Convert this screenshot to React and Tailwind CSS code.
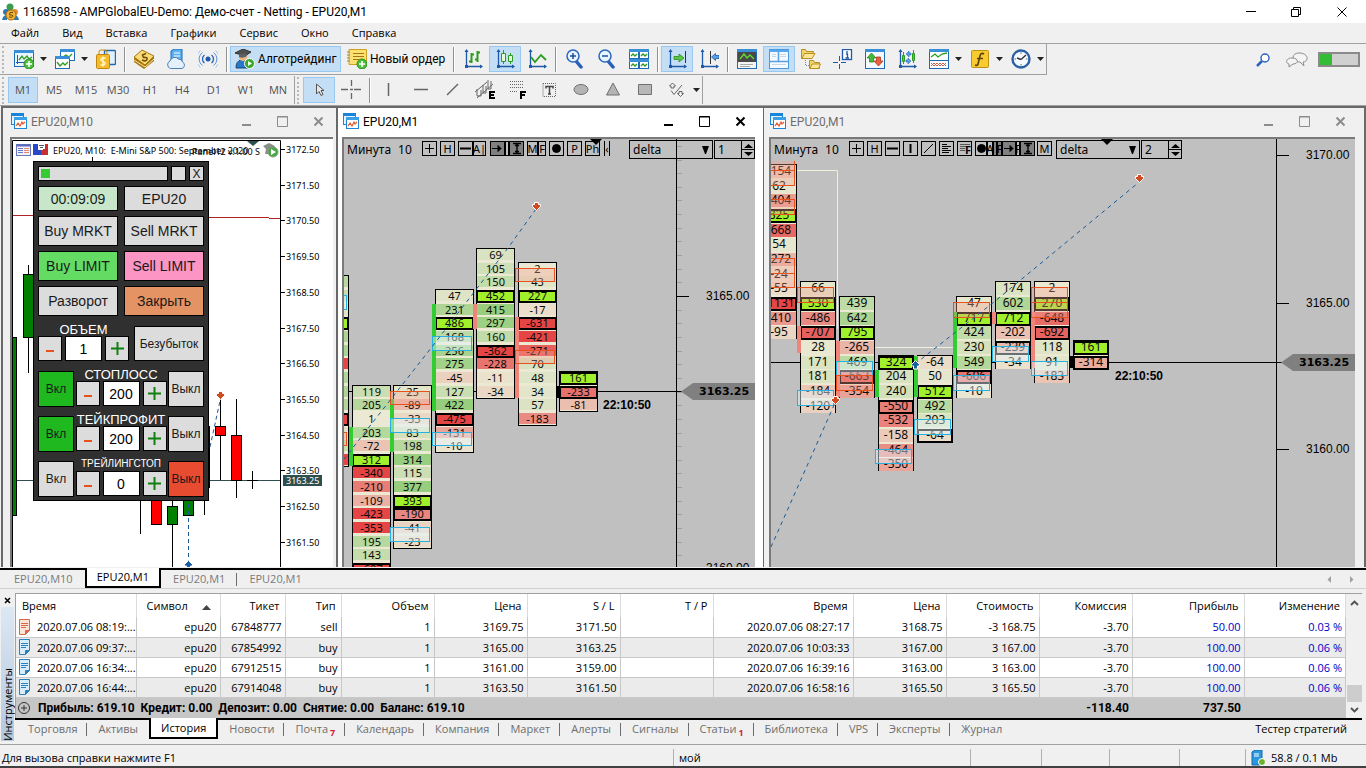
import React from "react";

const GREEN = "#33cc33";
const SALMON = "#f08478";
const ORANGE = "#e8501c";
const CYAN = "#28b0e0";
const LINK = "#1a5a96";

/* ---------- footprint data ---------- */

// start = row of the first cell, row 0 is 3165.00
const clustersLeft = [
  {
    x: -34,
    start: -1,
    bare: true,
    cells: [190, 130, 40, 610, 230, 240, -330, 220, 230, 210, -480, -20, 150, -430],
    boxes: [[0, CYAN], [10, ORANGE]],
  },
  {
    x: 8,
    start: 7,
    cells: [119, 205, 1, 203, -72, 312, -340, -210, -109, -423, -353, 195, 143, -607],
    bar: [GREEN, 10, 12],
  },
  {
    x: 49,
    start: 7,
    cells: [25, -89, -33, 83, 198, 314, 115, 377, 393, -190, -41, -23],
    bar: [GREEN, 8, 11],
    boxes: [[7, ORANGE], [9, CYAN], [17, CYAN]],
  },
  {
    x: 91,
    start: 0,
    cells: [47, 231, 486, 168, 256, 275, -45, 127, 422, -475, -131, -10],
    bar: [GREEN, 1, 8],
    boxes: [[3, CYAN], [10, CYAN]],
  },
  {
    x: 132,
    start: -3,
    cells: [69, 105, 150, 452, 415, 297, 160, -362, -228, -11, -34],
    bar: [SALMON, 1, 2],
  },
  {
    x: 174,
    start: -2,
    cells: [2, 43, 227, -17, -631, -421, -271, 70, 48, 34, 57, -183],
    bar: [SALMON, 2, 7],
    boxes: [[-2, ORANGE], [4, ORANGE]],
  },
  { x: 215, start: 6, cells: [161, -233, -81], bar: ["#000", 7, 7] },
];

const clustersRight = [
  {
    x: -10,
    start: -9,
    cells: [-154, 62, -404, 825, -668, 54, -272, -24, -55, -1131, -410, -95],
    boxes: [[-10, ORANGE], [-9, ORANGE], [-7, ORANGE], [-3, ORANGE], [-2, ORANGE]],
  },
  {
    x: 29,
    start: -1,
    cells: [66, 530, -486, -707, 28, 171, 181, -184, -120],
    bar: [SALMON, 2, 3],
    boxes: [[-1, ORANGE], [6, CYAN]],
  },
  {
    x: 68,
    start: 0,
    cells: [439, 642, 795, -265, 469, -663, -354],
    bar: [SALMON, 3, 6],
    boxes: [[4, CYAN], [5, ORANGE]],
  },
  {
    x: 107,
    start: 4,
    cells: [324, 204, 240, -550, -532, -158, -464, -350],
    bar: [GREEN, 5, 6],
    boxes: [[10, CYAN]],
  },
  {
    x: 146,
    start: 4,
    cells: [-64, 50, 512, 492, 203, -64],
    bar: [GREEN, 4, 6],
    boxes: [[8, CYAN]],
  },
  {
    x: 185,
    start: 0,
    cells: [47, 717, 424, 230, 549, -606, -10],
    bar: [GREEN, 1, 4],
    boxes: [[0, ORANGE], [5, CYAN]],
  },
  {
    x: 224,
    start: -1,
    cells: [174, 602, 712, -202, -239, -34],
    bar: [SALMON, 1, 1],
    boxes: [[3, CYAN]],
  },
  {
    x: 263,
    start: -1,
    cells: [2, 270, -648, -692, 118, 91, -183],
    bar: [SALMON, 1, 4],
    boxes: [[-1, ORANGE], [0, ORANGE], [4, CYAN]],
  },
  { x: 302, start: 3, cells: [161, -314], bar: ["#000", 4, 4] },
];

const mix = (to, k) => {
  const from = [235, 232, 211];
  const c = from.map((v, i) => Math.round(v + (to[i] - v) * k));
  return `rgb(${c.join(",")})`;
};

const cellColor = (value, scale) =>
  value >= 0
    ? mix([150, 206, 126], Math.min(1, value / scale))
    : mix([230, 69, 69], Math.min(1, -value / scale));

const Cluster = ({ data, width, pitch, zero, scale, size }) => {
  const { x, start, cells, bar, boxes = [], bare } = data;
  const rowY = (row) => Math.round(zero + row * pitch);
  const top = rowY(start) - 7;
  const height = rowY(start + cells.length - 1) + 7 - top;
  const max = Math.max(...cells);
  const hot = cells.indexOf(max);
  const cold = cells.lastIndexOf(Math.min(...cells));

  return (
    <g>
      <rect x={x + 0.5} y={top + 0.5} width={width - 1} height={height - 1} fill="#ebe8d3" stroke="#000" />
      {cells.map((v, i) => {
        const y = rowY(start + i);
        const strong = i === hot || i === cold;
        return strong ? (
          <rect
            key={i}
            x={x + 1}
            y={y - 5}
            width={width - 2}
            height={pitch > 14 ? 12 : 11}
            fill={i === hot ? "#a0f02c" : cellColor(v, scale)}
            stroke="#000"
            strokeWidth="2"
          />
        ) : (
          <rect key={i} x={x + 1} y={y - 6} width={width - 2} height={pitch > 14 ? 13 : 11} fill={cellColor(v, scale)} />
        );
      })}
      {bar && (
        <rect
          x={x - 3}
          y={rowY(bar[1]) - 6}
          width="4"
          height={rowY(bar[2]) - rowY(bar[1]) + 12}
          fill={bar[0]}
        />
      )}
      {!bare &&
        cells.map((v, i) => (
          <text
            key={i}
            x={x + width / 2}
            y={rowY(start + i) + 4}
            textAnchor="middle"
            fontSize={size}
            fill="#0a0a0a"
          >
            {v}
          </text>
        ))}
      {boxes.map(([row, color], i) => (
        <rect
          key={i}
          x={x - 2.5}
          y={rowY(row) - 0.5}
          width={width}
          height={rowY(row + 1) - rowY(row)}
          fill={color === CYAN ? "#e4f6fc" : "#f4a090"}
          fillOpacity={color === CYAN ? "0.45" : "0.35"}
          stroke={color}
        />
      ))}
    </g>
  );
};

const SellMark = ({ x, y }) => (
  <path
    d={`M${x - 1.5} ${y - 3.5}h4v2h2v2l-4 4l-4 -4v-2h2z`}
    fill="#d04a20"
    stroke="#fff"
    strokeWidth="1"
  />
);

const BuyMark = ({ x, y }) => (
  <path
    d={`M${x - 1.5} ${y + 4}h4v-3h2v-1.500l-4 -4l-4 4v1.500h2z`}
    fill="#1a5f9e"
    stroke="#fff"
    strokeWidth="1"
  />
);

const PriceAxis = ({ zero, pitch, labels, tagY, ticks }) => {
  const rows = Array.from({ length: 42 }, (_, i) => i - 12);
  return (
    <svg className="w-[79px] shrink-0 self-stretch overflow-hidden bg-[#c0c0c0]">
      <path d="M0.500 0V2000" stroke="#000" />
      {ticks &&
        rows.map((r) => (
          <path key={r} d={`M1 ${Math.round(zero + r * pitch) + 0.5}h5`} stroke="#a0a0a0" />
        ))}
      {labels.map(([text, y]) => (
        <g key={text}>
          <path d={`M1 ${y + 0.5}h12`} stroke="#000" />
          <text x="30" y={y + 4} fontSize="12" className="font-['Liberation_Sans',sans-serif]">
            {text}
          </text>
        </g>
      ))}
      <path d={`M0 ${tagY + 0.5}h6`} stroke="#000" />
      <path d={`M5 ${tagY + 0.5}L17 ${tagY - 8}H79V${tagY + 9}H17Z`} fill="#808080" />
      <text
        x="23"
        y={tagY + 4}
        fontSize="11"
        fontWeight="700"
        className="font-['DejaVu_Sans',sans-serif]"
      >
        3163.25
      </text>
    </svg>
  );
};

/* ---------- small square buttons above a footprint ---------- */

const toolGlyphs = {
  plus: <path d="M2 6.500h9M6.500 2v9" />,
  dash: <path d="M1 6.500h11" strokeWidth="2" />,
  bar: <path d="M6.500 2v9" strokeWidth="2" />,
  slash: <path d="M2 11L11 2" />,
  lines: <path d="M2 2.500h5M2 4.500h9M2 6.500h6M2 8.500h9M2 10.500h7" />,
  grid: <path d="M2 2.500h10M2 4.500h10M2 6.500h5M2 8.500h5" stroke="#555" />,
  dot: <circle cx="6.500" cy="6.500" r="4" fill="#000" />,
  right: <path d="M1 6.500h9M7 3.500l3 3l-3 3z" fill="#000" />,
  beam: <path d="M3 1.500h8M3 11.500h8M7 2v9M5 3.500h4M5 9.500h4" strokeWidth="1.400" />,
};

const Tool = ({ name, glyph, text, dark, wide }) => (
  <button
    type="button"
    aria-label={name}
    className={`relative flex h-[15px] shrink-0 items-center justify-center border border-black ${
      wide || "w-[15px]"
    } ${dark ? "bg-[#808080]" : ""}`}
  >
    {glyph && (
      <svg width="13" height="13" className="shrink-0" fill="none" stroke="#000">
        {toolGlyphs[glyph]}
      </svg>
    )}
    {text}
  </button>
);

const DeltaControls = ({ id, count }) => (
  <div className="flex h-[19px]">
    <div className="relative flex w-[84px] border border-black">
      <select
        aria-label={`Режим ${id}`}
        className="w-full appearance-none bg-transparent pl-[3px] text-xs leading-[17px] outline-none"
      >
        <option>delta</option>
      </select>
      <svg width="9" height="8" className="pointer-events-none absolute right-[2px] top-[5px]">
        <path d="M1 0h7L5 8H4z" />
      </svg>
    </div>
    <div className="ml-px flex w-[41px] border border-black">
      <input
        aria-label={`Масштаб ${id}`}
        defaultValue={count}
        className="w-[26px] bg-transparent pl-[3px] text-xs leading-[17px] outline-none"
      />
      <div className="flex w-[13px] flex-col border-l border-black">
        <button type="button" aria-label="Больше" className="flex flex-1 items-center justify-center border-b border-black">
          <svg width="9" height="5"><path d="M0 5L4.500 1L9 5z" /></svg>
        </button>
        <button type="button" aria-label="Меньше" className="flex flex-1 items-center justify-center">
          <svg width="9" height="5"><path d="M0 0L4.500 4L9 0z" /></svg>
        </button>
      </div>
    </div>
  </div>
);

const Minute = () => (
  <div className="flex w-[75px] gap-[7px] text-xs leading-[19px]">
    <span>Минута</span>
    <span>10</span>
  </div>
);

const FootprintLeft = () => (
  <div className="relative flex min-h-0 flex-1 bg-[#c0c0c0] font-['Noto_Sans',sans-serif]">
    <svg className="min-w-0 flex-1 self-stretch overflow-hidden">
      <path d="M0 252.500H400" stroke="#000" />
      {clustersLeft.map((c) => (
        <Cluster key={c.x} data={c} width={39} pitch={13.65} zero={157} scale={320} size="11" />
      ))}
      <path
        d="M192 70L164 109L91 204L0 320"
        fill="none"
        stroke={LINK}
        strokeDasharray="4 4"
      />
      <SellMark x={192} y={67} />
      <text x="259" y="270" fontSize="12" fontWeight="700" className="font-['Liberation_Sans',sans-serif]">
        22:10:50
      </text>
      <path d="M246 0h12l-6 6z" />
    </svg>
    <PriceAxis zero={157} pitch={13.65} labels={[["3165.00", 157], ["3160.00", 429]]} tagY={252} ticks />
    <div className="absolute left-[3px] right-0 top-px flex items-start text-black">
      <Minute />
      <div className="flex gap-[3px] pt-px text-[11px] leading-none">
        <Tool name="Плюс" glyph="plus" />
        <Tool name="Гистограмма" text="H" />
        <div className="flex">
          <Tool name="Линия" glyph="dash" />
          <Tool name="Авто" text="A|" wide="w-[13px]" />
          <Tool name="Сдвиг" glyph="right" dark wide="ml-[4px] w-[15px]" />
          <Tool name="Пустая" wide="w-[4px]" />
          <Tool name="Высота" glyph="beam" dark />
          <Tool name="Маркер" text="M" wide="ml-[3px] w-[11px]" />
          <Tool name="Фибо" text="F" wide="w-[8px]" />
        </div>
        <Tool name="Точка" glyph="dot" />
        <Tool name="Профиль" text="P" />
        <Tool name="История профиля" text="Ph" />
        <Tool name="Свернуть" text="‹" wide="ml-px w-[6px] border-y-0" />
      </div>
      <div className="ml-auto">
        <DeltaControls id="EPU20 1" count="1" />
      </div>
    </div>
  </div>
);

const FootprintRight = () => (
  <div className="relative flex min-h-0 flex-1 bg-[#c0c0c0] font-['Noto_Sans',sans-serif]">
    <svg className="min-w-0 flex-1 self-stretch overflow-hidden">
      <defs>
        <clipPath id="plot">
          <rect x="0" y="22" width="4000" height="2000" />
        </clipPath>
      </defs>
      <path d="M0 223.500H4000" stroke="#000" />
      <path d="M26 31.500H66.500V190M104 208.500H185" fill="none" stroke="#f0f0dc" />
      <g clipPath="url(#plot)">
        {clustersRight.map((c) => (
          <Cluster key={c.x} data={c} width={36} pitch={14.65} zero={164} scale={850} size="12" />
        ))}
      </g>
      <path d="M0 408L64 264M144 225L223 163L367 44" fill="none" stroke={LINK} strokeDasharray="4 4" />
      <SellMark x={64} y={261} />
      <BuyMark x={144} y={226} />
      <SellMark x={368} y={39} />
      <text x="344" y="241" fontSize="12" fontWeight="700" className="font-['Liberation_Sans',sans-serif]">
        22:10:50
      </text>
    </svg>
    <PriceAxis
      zero={164}
      pitch={14.65}
      labels={[["3170.00", 16], ["3165.00", 164], ["3160.00", 310]]}
      tagY={223}
    />
    <div className="absolute left-[3px] top-px flex items-start text-black">
      <Minute />
      <div className="flex gap-[3px] pt-px text-[11px] leading-none">
        <Tool name="Плюс" glyph="plus" />
        <Tool name="Гистограмма" text="H" />
        <Tool name="Линия" glyph="dash" />
        <Tool name="Вертикаль" glyph="bar" />
        <Tool name="Тренд" glyph="slash" />
        <Tool name="Профиль" glyph="lines" />
        <Tool name="Фибо" glyph="grid" text={<b className="absolute bottom-0 right-0">F</b>} />
        <div className="flex">
          <Tool name="Точка" glyph="dot" wide="w-[12px]" />
          <Tool name="Авто" text="A" wide="w-[6px]" />
          <Tool name="Пустая" dark wide="w-[4px]" />
          <Tool name="Фильтр" text="F" dark wide="w-[5px]" />
          <Tool name="Сдвиг" glyph="right" dark wide="w-[14px]" />
          <Tool name="Форма" text="F" wide="w-[4px]" />
          <Tool name="Высота" glyph="beam" dark />
        </div>
        <Tool name="Маркер" text="M" wide="-ml-px w-[15px]" />
      </div>
      <div className="relative ml-[4px]">
        <DeltaControls id="EPU20 2" count="2" />
        <svg width="12" height="6" className="absolute -top-px left-[45px]">
          <path d="M0 0h12l-6 6z" />
        </svg>
      </div>
    </div>
  </div>
);

/* ---------- candle chart and trade panel ---------- */

const scalePrices = [
  "3172.50", "3171.50", "3170.50", "3169.50", "3168.50", "3167.50",
  "3166.50", "3165.50", "3164.50", "3163.50", "3162.50", "3161.50",
];

const Candle = ({ x, top, bottom, high, low, color }) => (
  <g>
    <path d={`M${x + 0.5} ${high}V${low}`} stroke="#000" />
    <rect x={x - 4.5} y={top + 0.5} width="10" height={bottom - top} fill={color} stroke="#000" />
  </g>
);

const CandleChart = () => (
  <svg className="absolute inset-0 h-full w-full bg-white font-['Noto_Sans',sans-serif]">
    <path d="M0 341.500H268" stroke="#2f4f4f" />
    <path d="M0 76.500H24M196 78.500H257M257 79.500H268" stroke="#b22222" fill="none" />
    <Candle x={-1} top={198} bottom={376} high={198} low={376} color="#008000" />
    <Candle x={16} top={135} bottom={198} high={126} low={234} color="#008000" />
    <path d="M80.500 18v6M128.500 360v35M192.500 360v16M197.500 287v62" stroke="#000" />
    <Candle x={144} top={350} bottom={385} high={350} low={385} color="#ff0000" />
    <Candle x={160} top={367} bottom={385} high={360} low={430} color="#008000" />
    <Candle x={176} top={350} bottom={376} high={350} low={376} color="#008000" />
    <Candle x={208} top={287} bottom={296} high={260} low={341} color="#ff0000" />
    <Candle x={224} top={296} bottom={341} high={260} low={359} color="#ff0000" />
    <path d="M240.500 332v18M235 341.500h11" stroke="#000" />
    <path d="M176.500 365V424M198 308L208 262" stroke={LINK} strokeDasharray="4 3" fill="none" />
    <SellMark x={208} y={256} />
    <BuyMark x={176} y={426} />
    <path d="M0.500 1000V1.500H268.500V1000" fill="none" stroke="#000" />
    {scalePrices.map((p, i) => {
      const y = Math.round(10 + i * 35.7);
      return (
        <g key={p}>
          <path d={`M269 ${y + 0.5}h4`} stroke="#000" />
          <text x="274" y={y + 4} fontSize="9">{p}</text>
        </g>
      );
    })}
    <rect x="271" y="336" width="39" height="11" fill="#2f4f4f" />
    <text x="274" y="345" fontSize="9" fill="#fff">3163.25</text>

    {/* quote table and depth icons */}
    <g>
      <rect x="4.500" y="5.500" width="14" height="11" fill="#f4f0f8" stroke="#6a78b8" />
      <path d="M5 6.500h13" stroke="#5868c0" strokeWidth="2" />
      <path d="M6 9.500h5M6 11.500h5M6 13.500h5" stroke="#6878d0" />
      <path d="M12 9.500h5M12 11.500h5M12 13.500h5" stroke="#e08878" />
      <path d="M21 5h5v6h3v5h-8z" fill="#2848c8" />
      <path d="M31 10h2V5h3v11h-7v-5h2z" fill="#c83030" />
      <path d="M27 6.500h5M28 8.500h3" stroke="#556" />
    </g>
    <text x="41" y="15" fontSize="9" xmlSpace="preserve">EPU20, M10:  E-Mini S&amp;P 500: September 2020</text>
    <text x="180" y="16" fontSize="9">Panel12 v.1.00 S</text>
    <path d="M235 2h12l-6 5z" fill="#2f4f4f" />
    <g>
      <path d="M251 7l6-3l6 3l-2 3l1 5h-9l1-5z" fill="#889088" />
      <circle cx="261" cy="13" r="5" fill="#4aa848" stroke="#8a9a80" />
      <path d="M259 10l5 3l-5 3z" fill="#fff" />
    </g>
  </svg>
);

const PanelButton = ({ children, label, tone = "bg-[#dcdcdc]", size = "h-[30px] text-sm" }) => (
  <button
    type="button"
    aria-label={label}
    className={`flex items-center justify-center whitespace-nowrap border border-black leading-none text-[#1a1a1a] ${tone} ${size}`}
  >
    {children}
  </button>
);

const Stepper = ({ label, value }) => (
  <div className="grid grid-cols-[24px_37px_24px] gap-[3px]">
    <PanelButton size="h-[25px]" label={`${label} меньше`}>
      <svg width="12" height="12">
        <path d="M2 8h8" stroke="#e8501c" strokeWidth="2" />
      </svg>
    </PanelButton>
    <input
      aria-label={label}
      defaultValue={value}
      className="h-[25px] min-w-0 border border-black bg-white text-center text-sm text-black outline-none"
    />
    <PanelButton size="h-[25px]" label={`${label} больше`}>
      <svg width="13" height="13">
        <path d="M0 6.500h13M6.500 0v13" stroke="#108010" strokeWidth="2" />
      </svg>
    </PanelButton>
  </div>
);

const SwitchRow = ({ label, value, on, small }) => (
  <div className="flex h-9 justify-between">
    <PanelButton size="h-9 w-9 text-xs" tone={on ? "bg-[#1fb81f]" : "bg-[#dcdcdc]"}>
      Вкл
    </PanelButton>
    <div className="-mt-[4px] flex flex-col items-center">
      <span
        className={`flex h-[14px] items-center whitespace-nowrap leading-none text-white ${
          small ? "text-[10px]" : "text-[13px]"
        }`}
      >
        {label}
      </span>
      <Stepper label={label} value={value} />
    </div>
    <PanelButton size="h-9 w-9 text-xs" tone={on ? "bg-[#dcdcdc]" : "bg-[#e84c30]"}>
      Выкл
    </PanelButton>
  </div>
);

const TradePanel = () => (
  <div className="absolute left-[21px] top-[22px] flex w-[176px] flex-col gap-[5px] border border-black bg-[#303030] px-[4px] pb-[3px] pt-[4px] font-['Liberation_Sans',sans-serif]">
    <div className="flex h-[15px] gap-[3px]">
      <div className="flex-1 border border-black bg-[#dcdcdc] p-[2px]">
        <div className="h-[9px] w-[9px] bg-[#33cc33]" />
      </div>
      <PanelButton size="w-[15px]" label="Свернуть" />
      <PanelButton size="w-[15px] text-xs">X</PanelButton>
    </div>
    <div className="grid grid-cols-2 gap-x-[6px] gap-y-[5px]">
      <PanelButton tone="bg-[#c8e6c9]" size="h-[25px] text-sm">00:09:09</PanelButton>
      <PanelButton size="h-[25px] text-sm">EPU20</PanelButton>
      <PanelButton>Buy MRKT</PanelButton>
      <PanelButton>Sell MRKT</PanelButton>
      <PanelButton tone="bg-[#64dc64]">Buy LIMIT</PanelButton>
      <PanelButton tone="bg-[#fc94c4]">Sell LIMIT</PanelButton>
      <PanelButton>Разворот</PanelButton>
      <PanelButton tone="bg-[#e49464]">Закрыть</PanelButton>
    </div>
    <div className="flex justify-between pt-[5px]">
      <div className="-mt-[4px] flex flex-col items-center">
        <span className="flex h-[14px] items-center text-[13px] leading-none text-white">ОБЪЕМ</span>
        <Stepper label="ОБЪЕМ" value="1" />
      </div>
      <PanelButton size="h-[35px] w-[70px] text-xs">Безубыток</PanelButton>
    </div>
    <div className="flex flex-col gap-[9px] pt-[5px]">
      <SwitchRow label="СТОПЛОСС" value="200" on />
      <SwitchRow label="ТЕЙКПРОФИТ" value="200" on />
      <SwitchRow label="ТРЕЙЛИНГСТОП" value="0" small />
    </div>
  </div>
);

/* ---------- chart windows ---------- */

const ChartWindow = ({ title, active, frame, inner, children }) => (
  <section
    className={`flex min-h-0 flex-col border-t-2 border-[#696969] ${frame} ${
      active ? "bg-white" : "bg-[#f0f0f0]"
    }`}
  >
    <header
      className={`-mr-[3px] flex h-[29px] shrink-0 items-center pb-[2px] ${active ? "text-black" : "text-[#6e6e6e]"}`}
    >
      <svg width="17" height="17" className="ml-px">
        <rect x="0.500" y="0.500" width="12" height="11" fill="#e8f4fc" stroke="#1a84d8" />
        <rect x="0" y="0" width="13" height="3" fill="#1a84d8" />
        <rect x="3.500" y="4.500" width="12" height="11" fill="#fff" stroke="#1a84d8" />
        <rect x="3" y="4" width="13" height="3" fill="#3aa0e8" />
        <path d="M5 13l2-3l2 3l2-4l1 2l2-2" fill="none" stroke="#e05a30" strokeWidth="1.200" />
      </svg>
      <h2 className="ml-[3px] flex-1 font-['Roboto',sans-serif] text-xs">{title}</h2>
      <div className={`flex ${active ? "text-black" : "text-[#8c8c8c]"}`}>
        <button type="button" aria-label="Свернуть" className="flex h-6 w-9 items-center justify-center">
          <svg width="11" height="11"><path d="M1 9h9" stroke="currentColor" strokeWidth="2" /></svg>
        </button>
        <button type="button" aria-label="Развернуть" className="flex h-6 w-9 items-center justify-center">
          <svg width="11" height="11">
            <path d="M0.500 0.500h10v10h-10z" fill="none" stroke="currentColor" />
            <path d="M0 1h11" stroke="currentColor" />
          </svg>
        </button>
        <button type="button" aria-label="Закрыть" className="flex h-6 w-9 items-center justify-center">
          <svg width="11" height="11">
            <path d="M1.500 1.500l8 8M9.500 1.500l-8 8" stroke="currentColor" strokeWidth="2" />
          </svg>
        </button>
      </div>
    </header>
    <div className={`relative flex min-h-0 flex-1 overflow-hidden border-l-2 border-t-2 border-[#7a7a7a] ${inner}`}>
      {children}
    </div>
  </section>
);

/* ---------- toolbar icons ---------- */

const plusBadge = (
  <g>
    <circle cx="15" cy="15" r="5" fill="#4cc03c" stroke="#2c8c20" />
    <path d="M12 15h6M15 12v6" stroke="#fff" strokeWidth="1.600" />
  </g>
);
const axes = (
  <g>
    <path d="M3.500 1v16.500H19" stroke="#1f5aa8" strokeWidth="1.300" fill="none" />
    <path d="M3.500 0L1.500 3h4zM20 17.500L17 15.500v4zM2 16h3v3H2z" fill="#1f5aa8" />
  </g>
);
const win = (x, y, w, h, fill = "#fff") => (
  <g>
    <rect x={x + 0.5} y={y + 0.5} width={w - 1} height={h - 1} fill={fill} stroke="#1f6ab4" />
    <rect x={x} y={y} width={w} height="3" fill="#3a90d8" />
  </g>
);

const icons = {
  newChart: (
    <g>
      {win(0, 1, 20, 17, "#eaf6ff")}
      <path d="M3.500 6v9M2 13.500h14" stroke="#1f5aa8" fill="none" />
      <path d="M5 11l3-4l2 3l3-3l2 3l3-2" stroke="#2c9c20" fill="none" strokeWidth="1.300" />
      {plusBadge}
    </g>
  ),
  profiles: (
    <g>
      {win(5, 0, 15, 12)}
      <path d="M8 8l3-2l3 2l3-3" stroke="#2c9c20" fill="none" strokeWidth="1.300" />
      {win(0, 7, 15, 13)}
      <path d="M2 13l3 4l3-3l2 2l3-3" stroke="#2c9c20" fill="none" strokeWidth="1.300" />
    </g>
  ),
  market: (
    <g>
      <rect x="8.500" y="1.500" width="11" height="14" rx="1" fill="#e0f0fc" stroke="#1f6ab4" strokeWidth="1.400" />
      <path d="M3 6V3q0-2 2-2h4q2 0 2 2v3" fill="none" stroke="#c08810" />
      <rect x="0.500" y="5.500" width="13" height="14" rx="1" fill="#f4bc28" stroke="#c08810" />
      <path d="M9.500 9.500q-2-1.500-4 0t1.500 3t1.500 3t-4 0M7 7.500v10" stroke="#fff8d8" fill="none" strokeWidth="1.300" />
    </g>
  ),
  coin: (
    <g>
      <path d="M0 9L8 1l12 7v4l-10 8L0 13z" fill="#a87818" />
      <path d="M0 8L8 1l12 6l-9 9z" fill="#f8dc78" stroke="#a87810" />
      <path d="M0 11l11 7l9-8" fill="none" stroke="#fce888" />
      <path d="M12 4.500L8.500 6l1 2.500q4.500-.5 3.500 2t-5 .5" stroke="#7a5008" fill="none" strokeWidth="1.600" />
    </g>
  ),
  cloud: (
    <g>
      <path d="M5 2l3-2h8v13H5z" fill="#5ab0f0" stroke="#1f6ab4" />
      <path d="M8 4h6M8 7h6" stroke="#fff" />
      <path
        d="M4.500 19.500a4 4 0 0 1-.5-7.500a5 5 0 0 1 8.500-2a4 4 0 0 1 4 3a3.500 3.500 0 0 1-.5 6.500z"
        fill="#e4f0fc"
        stroke="#4a80b8"
      />
    </g>
  ),
  signal: (
    <g fill="none" stroke="#5a90d8">
      <circle cx="10" cy="10" r="2.500" fill="#1f5aa8" stroke="none" />
      <path d="M6.500 6a5 5 0 0 0 0 8M13.500 6a5 5 0 0 1 0 8" stroke="#2a68b8" strokeWidth="1.400" />
      <path d="M4.500 3.500a8 8 0 0 0 0 13M15.500 3.500a8 8 0 0 1 0 13" />
      <path d="M2.500 1.500a11 11 0 0 0 0 17M17.500 1.500a11 11 0 0 1 0 17" stroke="#a0c0e8" />
    </g>
  ),
  algo: (
    <g>
      <path d="M1 19q0-7 5-8h5q4 1 4 8z" fill="#2a78c8" stroke="#184878" />
      <circle cx="8" cy="8" r="4" fill="#e8b888" />
      <path d="M0 4l8-4l8 3l-6 4z" fill="#505050" stroke="#303030" />
      <path d="M4 5v3q4 2 8-1V5z" fill="#606060" />
      <circle cx="14.500" cy="14.500" r="5" fill="#38a828" stroke="#fff" />
      <path d="M13 12l4 2.500l-4 2.500z" fill="#fff" />
    </g>
  ),
  order: (
    <g>
      <path d="M2 0.500h17.500v15H2z" fill="#fce070" stroke="#d0a020" />
      <path d="M0 3h3M0 6h3M0 9h3M0 12h3" stroke="#888" />
      <path d="M6 4.500h11M6 7.500h11M6 10.500h6" stroke="#a07818" />
      {plusBadge}
    </g>
  ),
  bars: (
    <g>
      {axes}
      <path d="M8.500 4v10M6 12.500h2.500M8.500 5.500H11M14.500 2v11M12 10.500h2.500M14.500 3.500H17" stroke="#2c9c20" strokeWidth="2" />
    </g>
  ),
  candles: (
    <g>
      {axes}
      <path d="M8.500 1v14M15.500 4v11" stroke="#2c9c20" />
      <path d="M6.500 4.500h4v8h-4zM13.500 6.500h4v6h-4z" fill="#e0fcd8" stroke="#2c9c20" />
    </g>
  ),
  line: (
    <g>
      {axes}
      <path d="M4 8l4 5l6-7l5 5" fill="none" stroke="#2c9c20" strokeWidth="1.800" />
    </g>
  ),
  zoomIn: (
    <g>
      <path d="M11 12l5 6" stroke="#2a60b8" strokeWidth="3.500" strokeLinecap="round" />
      <circle cx="8" cy="7" r="6" fill="#e8f4ff" stroke="#2a68c0" strokeWidth="1.500" />
      <path d="M5 7h6M8 4v6" stroke="#1f4f98" strokeWidth="1.500" />
    </g>
  ),
  zoomOut: (
    <g>
      <path d="M11 12l5 6" stroke="#2a60b8" strokeWidth="3.500" strokeLinecap="round" />
      <circle cx="8" cy="7" r="6" fill="#e8f4ff" stroke="#2a68c0" strokeWidth="1.500" />
      <path d="M5 7h6" stroke="#1f4f98" strokeWidth="1.500" />
    </g>
  ),
  tile: (
    <g>
      {win(0, 0, 10, 10)}
      {win(10, 0, 10, 10)}
      {win(0, 10, 10, 10)}
      {win(10, 10, 10, 10)}
      <path d="M2 7l2-2l2 2l2-2M12 7l2-2l2 2l2-2M2 17l2-2l2 2l2-2M12 17l2-2l2 2l2-2" fill="none" stroke="#2c9c20" strokeWidth="1.300" />
    </g>
  ),
  scroll: (
    <g>
      {axes}
      <path d="M18.500 2v12" stroke="#333" />
      <path d="M7 7.500h5V5l5 4l-5 4v-2.500H7z" fill="#58c840" stroke="#2c8c20" strokeWidth="0.800" />
    </g>
  ),
  shift: (
    <g>
      {axes}
      <path d="M11.500 2v13" stroke="#333" />
      <path d="M20 6.500h-3.500V4.500l-4 3.500l4 3.500V9.500H20z" fill="#58a0e8" stroke="#1f5aa8" strokeWidth="0.800" />
    </g>
  ),
  screen: (
    <g>
      {win(0, 0, 20, 20, "#484848")}
      <path d="M3 10l4-5l3 4l3-3l4 4" fill="none" stroke="#60d838" strokeWidth="1.400" />
      <rect x="1" y="13" width="18" height="6" fill="#f4f4f4" />
      <path d="M3 15.500h13M3 17.500h10" stroke="#aaa" />
    </g>
  ),
  panels: (
    <g>
      <rect x="0.500" y="0.500" width="19" height="19" fill="#f4faff" stroke="#4a98e0" />
      <path d="M0 2h20" stroke="#58a8f0" strokeWidth="2" />
      <path d="M9.500 3v9M0 12.500h20" stroke="#5aa0e0" strokeWidth="1.500" />
      <path d="M3 5.500h4M3 7.500h4M11 5.500h6M11 7.500h6M3 15.500h14" stroke="#c8d8e8" />
    </g>
  ),
  folders: (
    <g>
      <path d="M0.500 0.500h4l1 2h7l-2 7H0.500z" fill="#f0d470" stroke="#b89020" />
      <path d="M1 9.500l2.500-5H14l-3 5z" fill="#fce898" stroke="#b89020" />
      <path d="M8.500 11.500h4l1 2h5v6H8.500z" fill="#f0d470" stroke="#b89020" />
      <path d="M9 19.500l2-4.500h8.500l-2 4.500z" fill="#fce898" stroke="#b89020" />
      <path d="M4.500 11v5.500H8" fill="none" stroke="#888" strokeDasharray="1 1" />
    </g>
  ),
  info: (
    <g>
      <rect x="9.500" y="0.500" width="9" height="10" fill="#fff" stroke="#1f5aa8" strokeWidth="1.300" />
      <path d="M14 2v2M13 5h1.500v3.500M12.500 9h3.500" stroke="#1f5aa8" strokeWidth="1.300" fill="none" />
      <path d="M0 13.500h5M8 13.500h5M6.500 7v5M6.500 15v5" stroke="#1f5aa8" />
    </g>
  ),
  trade: (
    <g>
      {win(0, 0, 20, 20, "#f4faff")}
      <path d="M6.500 4l4.500 5H8.500v4h-4V9H2z" fill="#48b838" stroke="#2c8c20" strokeWidth="0.800" />
      <path d="M13.500 17l4.500-5h-2.500V8h-4v4H9z" fill="#e86040" stroke="#b03818" strokeWidth="0.800" />
    </g>
  ),
  range: (
    <g>
      {axes}
      <path d="M6.500 3v12M16.500 1v13" stroke="#2c9c20" />
      <path d="M5.500 6.500h2v6h-2zM15.500 4.500h2v7h-2z" fill="#58c840" stroke="#2c9c20" />
      <path d="M14 4h-2V2L9 5l3 3V6h2zM9 11h2V9l3 3l-3 3v-2H9z" fill="#58a0e8" stroke="#2a68b8" strokeWidth="0.600" />
    </g>
  ),
  indicators: (
    <g>
      {win(0, 0, 20, 20)}
      <path d="M2 8l4-3l3 3l4-3l5-1" fill="none" stroke="#2c9c20" strokeWidth="1.300" />
      <path d="M0 11.500h20" stroke="#1f6ab4" />
      <path d="M2 17l3-3l3 3l3-3l3 3l3-3M2 14l3 3l3-3l3 3l3-3l3 3" fill="none" stroke="#c86050" />
    </g>
  ),
  func: (
    <g>
      <rect x="1.500" y="1.500" width="17" height="17" rx="1" fill="#f8cc30" stroke="#c09010" />
      <path d="M14 5q-3-2-4 2l-2 8q-0.500 2-3 1M7 9.500h6" fill="none" stroke="#5a4008" strokeWidth="1.600" />
    </g>
  ),
  clock: (
    <g>
      <circle cx="10" cy="10" r="8.500" fill="#f4faff" stroke="#2a60a8" strokeWidth="2.400" />
      <path d="M10 10.500L15 6M10 10.500L6 9" stroke="#333" strokeWidth="1.400" />
      <path d="M10 3.500v1.500M10 15v1.500M3.500 10H5M15 10h1.500" stroke="#666" />
    </g>
  ),
  cursor: <path d="M7.500 4v10l2.500-2.500l2 4l2-1l-2-4h3z" fill="#e8e8e8" stroke="#555" />,
  cross: <path d="M0 9.500h7M13 9.500h7M10.500 0v6M10.500 13v6M9 9.500h3" stroke="#666" strokeWidth="1.300" />,
  vline: <path d="M9.500 3v13" stroke="#666" strokeWidth="1.500" />,
  hline: <path d="M3 9.500h14" stroke="#666" strokeWidth="1.500" />,
  slash: <path d="M4 15L15 4" stroke="#666" strokeWidth="1.500" />,
  channel: (
    <g>
      <path d="M0 12L12 2M2 18L18 4M2 9v7h4v-6M8 5v8h3V6M13 0v9h3V1" fill="none" stroke="#666" />
      <path d="M15 11v8M15 12h5M15 15h4M15 18h5" stroke="#000" strokeWidth="2" />
    </g>
  ),
  fibo: (
    <g>
      <path d="M3 1.500h14M3 4.500h14M3 7.500h14M3 11.500h8" stroke="#666" strokeDasharray="1 1" />
      <path d="M14 11v8M14 12h5M14 15h4" stroke="#000" strokeWidth="2" />
    </g>
  ),
  label: (
    <g>
      <path d="M4 3.500h12.500v13H4z" fill="none" stroke="#666" strokeDasharray="1 1" />
      <path d="M7 8.500v-2h7v2M10.500 6v8M9 14h3" stroke="#444" strokeWidth="1.500" fill="none" />
    </g>
  ),
  ellipse: <ellipse cx="10" cy="9.500" rx="7" ry="5" fill="#b4b4b4" stroke="#707070" />,
  triangle: <path d="M10 3l6.500 12h-13z" fill="#b4b4b4" stroke="#707070" />,
  square: <path d="M3.500 4.500h13v10h-13z" fill="#b8b8b8" stroke="#707070" />,
  shapes: (
    <g fill="none" stroke="#666">
      <path d="M5.500 3l3 3h-1.500v2h-3V6H2.500z" />
      <path d="M4 10.500l3 4L15 5" />
      <path d="M13.500 16.500l3-3h-1.500v-2h-3v2h-1.500z" />
    </g>
  ),
};

const Icon = ({ name }) => (
  <svg width="20" height="20" viewBox="0 0 20 20" fill="none" className="shrink-0">
    {icons[name]}
  </svg>
);

const IconButton = ({ name, title, pressed, menu }) => (
  <button type="button" aria-label={title} className="flex h-full items-center">
    <span
      className={`flex h-[26px] w-8 items-center justify-center border ${
        pressed ? "border-[#98c8f0] bg-[#c4def5]" : "border-transparent"
      }`}
    >
      <Icon name={name} />
    </span>
    {menu && (
      <svg width="9" height="5" className="-ml-px mr-px">
        <path d="M1 0h7L4.500 4z" fill="#222" />
      </svg>
    )}
  </button>
);

const Divider = () => <div className="mx-[2px] h-[25px] w-[2px] shrink-0 border-l border-[#909090] bg-white" />;

const Grip = () => (
  <div className="ml-[2px] mr-[3px] h-[27px] w-[3px] shrink-0 border-l-2 border-dotted border-[#b8b8b8]" />
);

const Toolbar = () => (
  <div className="flex h-[32px] items-center border-t border-[#a0a0a0] font-['Roboto',sans-serif]">
    <div className="flex h-full items-center border-b border-r border-[#a0a0a0]">
      <Grip />
      <IconButton name="newChart" title="Новый график" menu />
      <IconButton name="profiles" title="Профили" menu />
      <IconButton name="market" title="Маркет" />
      <Divider />
      <IconButton name="coin" title="MetaEditor" />
      <IconButton name="cloud" title="Виртуальный хостинг" />
      <IconButton name="signal" title="Сигналы" />
      <Divider />
      <button
        type="button"
        className="flex h-[26px] w-[111px] shrink-0 items-center gap-[3px] whitespace-nowrap border border-[#98c8f0] bg-[#c4def5] pl-[4px] text-xs"
      >
        <Icon name="algo" />
        Алготрейдинг
      </button>
      <button type="button" className="flex h-[26px] w-[110px] shrink-0 items-center gap-[3px] whitespace-nowrap pl-[6px] text-xs">
        <Icon name="order" />
        Новый ордер
      </button>
      <Divider />
      <IconButton name="bars" title="Бары" />
      <IconButton name="candles" title="Свечи" pressed />
      <IconButton name="line" title="Линия" />
      <Divider />
      <IconButton name="zoomIn" title="Увеличить" />
      <IconButton name="zoomOut" title="Уменьшить" />
      <IconButton name="tile" title="Разложить окна" />
      <Divider />
      <IconButton name="scroll" title="Автопрокрутка" pressed />
      <IconButton name="shift" title="Сдвиг графика" />
      <Divider />
      <IconButton name="screen" title="Обзор рынка" />
      <IconButton name="panels" title="Инструменты" pressed />
      <IconButton name="folders" title="Навигатор" />
      <IconButton name="info" title="Окно данных" />
      <IconButton name="trade" title="Торговля" />
      <IconButton name="range" title="Масштаб" />
      <IconButton name="indicators" title="Индикаторы" menu />
      <IconButton name="func" title="Функции" menu />
      <IconButton name="clock" title="Периоды" menu />
    </div>
    <div className="ml-auto flex items-center pr-[6px]">
      <button type="button" aria-label="Поиск">
        <svg width="14" height="14">
          <path d="M6 8l-5 5" stroke="#2a60c0" strokeWidth="2.500" />
          <circle cx="9" cy="5" r="4" fill="#fff" stroke="#2a60c0" strokeWidth="1.400" />
        </svg>
      </button>
      <button type="button" aria-label="Чат" className="ml-4">
        <svg width="22" height="16" fill="#f4f4f4" stroke="#8c8c8c">
          <path d="M13 1c10 0 10 9 4 9l1 4l-4-4c-9 0-9-9-1-9z" />
          <path d="M6 6c7 0 7 6 1 6l-4 3v-3c-4-1-3-6 3-6z" />
        </svg>
      </button>
      <div className="ml-[10px] h-[15px] w-[42px] border-2 border-[#8a8a8a] bg-[#d0d0d0]">
        <div className="h-full w-[12px] bg-[#34bc34]" />
      </div>
    </div>
  </div>
);

const periods = ["M5", "M15", "M30", "H1", "H4", "D1", "W1", "MN"];

const Periods = () => (
  <div className="flex h-[31px] items-center border-b border-[#a0a0a0] text-[#505050]">
    <Grip />
    <button type="button" className="h-[26px] w-[30px] border border-[#98c8f0] bg-[#c4def5]">
      M1
    </button>
    {periods.map((p) => (
      <button key={p} type="button" className="h-[26px] w-8">
        {p}
      </button>
    ))}
    <div className="h-[28px] w-px bg-[#a0a0a0]" />
    <Grip />
    <IconButton name="cursor" title="Курсор" pressed />
    <IconButton name="cross" title="Перекрестие" />
    <Divider />
    <IconButton name="vline" title="Вертикальная линия" />
    <IconButton name="hline" title="Горизонтальная линия" />
    <IconButton name="slash" title="Трендовая линия" />
    <IconButton name="channel" title="Канал" />
    <IconButton name="fibo" title="Фибоначчи" />
    <IconButton name="label" title="Текст" />
    <IconButton name="ellipse" title="Эллипс" />
    <IconButton name="triangle" title="Треугольник" />
    <IconButton name="square" title="Прямоугольник" />
    <IconButton name="shapes" title="Объекты" menu />
    <div className="h-[28px] w-px bg-[#a0a0a0]" />
  </div>
);

/* ---------- terminal ---------- */

const columns = [
  ["Время", "w-[120px]"],
  ["Символ", "w-[84px]"],
  ["Тикет", "w-[65px]"],
  ["Тип", "w-[56px]"],
  ["Объем", "w-[93px]"],
  ["Цена", "w-[93px]"],
  ["S / L", "w-[93px]"],
  ["T / P", "w-[93px]"],
  ["Время", "w-[140px]"],
  ["Цена", "w-[93px]"],
  ["Стоимость", "w-[93px]"],
  ["Комиссия", "w-[93px]"],
  ["Прибыль", "w-[112px]"],
  ["Изменение", ""],
];

const deals = [
  ["2020.07.06 08:19:...", "epu20", "67848777", "sell", "1", "3169.75", "3171.50", "", "2020.07.06 08:27:17", "3168.75", "-3 168.75", "-3.70", "50.00", "0.03 %"],
  ["2020.07.06 09:37:...", "epu20", "67854992", "buy", "1", "3165.00", "3163.25", "", "2020.07.06 10:03:33", "3167.00", "3 167.00", "-3.70", "100.00", "0.06 %"],
  ["2020.07.06 16:34:...", "epu20", "67912515", "buy", "1", "3161.00", "3159.00", "", "2020.07.06 16:39:16", "3163.00", "3 163.00", "-3.70", "100.00", "0.06 %"],
  ["2020.07.06 16:44:...", "epu20", "67914048", "buy", "1", "3163.50", "3161.50", "", "2020.07.06 16:58:16", "3165.50", "3 165.50", "-3.70", "100.00", "0.06 %"],
];

const DealIcon = ({ sell }) => (
  <svg width="13" height="16" className="shrink-0" fill={sell ? "#fce4d8" : "#d8eefc"} stroke={sell ? "#d86848" : "#2a80b8"}>
    <path d="M1.500 0.500h10v11l-4 4h-6z" />
    <path d="M3 4.500h7M3 6.500h7M3 8.500h5" />
    <path d="M7.500 15v-3.500h4z" fill={sell ? "#d86848" : "#2a80b8"} />
  </svg>
);

const History = () => (
  <table className="w-full table-fixed border-collapse bg-white leading-none text-black">
    <thead>
      <tr className="h-[23px]">
        {columns.map(([name, width], i) => (
          <th
            key={i}
            className={`whitespace-nowrap border-r border-[#dcdcdc] p-0 font-normal ${width} ${
              i === 0 ? "pl-[6px] text-left" : i === 1 ? "pl-[10px] text-left" : "pr-[5px] text-right"
            }`}
          >
            {name}
            {i === 1 && (
              <svg width="9" height="5" className="ml-[14px] inline-block align-middle">
                <path d="M4.500 0L9 5H0z" fill="#444" />
              </svg>
            )}
          </th>
        ))}
      </tr>
    </thead>
    <tbody>
      {deals.map((row, r) => (
        <tr key={r} className={`h-5 ${r % 2 ? "bg-[#ebebeb]" : "bg-white"}`}>
          {row.map((cell, i) => (
            <td
              key={i}
              className={`whitespace-nowrap border-b border-r border-[#c8c8c8] p-0 pr-[3px] text-right ${
                i > 11 ? "text-[#0000c8]" : ""
              }`}
            >
              {i === 0 ? (
                <span className="flex items-center gap-[6px] pl-[2px]">
                  <DealIcon sell={row[3] === "sell"} />
                  {cell}
                </span>
              ) : (
                cell
              )}
            </td>
          ))}
        </tr>
      ))}
      <tr className="h-[21px] bg-[#c6c6c6] font-['Roboto',sans-serif] text-xs font-bold leading-none">
        <td colSpan={11} className="p-0">
          <span className="flex items-center gap-[8px] whitespace-pre pl-[2px]">
            <svg width="12" height="12" fill="none" stroke="#333">
              <circle cx="6" cy="6" r="5.500" />
              <path d="M3 6h6M6 3v6" />
            </svg>
            Прибыль: 619.10  Кредит: 0.00  Депозит: 0.00  Снятие: 0.00  Баланс: 619.10
          </span>
        </td>
        <td className="p-0 pr-[3px] text-right">-118.40</td>
        <td className="p-0 pr-[3px] text-right">737.50</td>
        <td className="p-0" />
      </tr>
    </tbody>
  </table>
);

const tabs = [
  ["Торговля"], ["Активы"], ["История"], ["Новости"], ["Почта", "7"], ["Календарь"], ["Компания"], ["Маркет"],
  ["Алерты"], ["Сигналы"], ["Статьи", "1"], ["Библиотека"], ["VPS"], ["Эксперты"], ["Журнал"],
];

const TerminalTabs = () => (
  <nav className="flex h-[23px] gap-px border-t-2 border-black text-[#6e6e6e]">
    <div className="w-[2px]" />
    {tabs.map(([name, badge], i) =>
      name === "История" ? (
        <button
          key={name}
          type="button"
          className="-mt-[2px] flex h-[21px] items-center whitespace-nowrap border-2 border-t-0 border-black bg-white px-[10px] pt-[2px] text-black"
        >
          {name}
        </button>
      ) : (
        <button key={name} type="button" className="relative flex h-[18px] items-center whitespace-nowrap px-[10px]">
          {name}
          {badge && <sub className="top-[4px] ml-[2px] text-[9px] font-bold text-[#d82030]">{badge}</sub>}
          {name !== "Активы" && i !== tabs.length - 1 && (
            <span className="absolute right-0 top-[3px] h-[13px] w-px bg-[#6e6e6e]" />
          )}
        </button>
      )
    )}
    <button type="button" className="ml-auto flex h-[18px] items-center whitespace-nowrap pr-[15px] text-black">
      Тестер стратегий
    </button>
  </nav>
);

const Terminal = () => (
  <section className="flex shrink-0 bg-[#f0f0f0] pb-[3px] pr-[4px] pt-[4px]">
    <div className="flex w-[15px] shrink-0 flex-col items-center">
      <button type="button" aria-label="Закрыть панель" className="flex h-[14px] items-center">
        <svg width="7" height="7">
          <path d="M1 1l5 5M6 1l-5 5" stroke="#000" strokeWidth="1.500" />
        </svg>
      </button>
      <div className="flex w-[13px] flex-1 items-center justify-start bg-linear-to-b from-[#dce8f4] to-[#b4c8dc] [writing-mode:vertical-rl]">
        <span className="mt-auto rotate-180 whitespace-nowrap leading-[13px]">Инструменты</span>
      </div>
    </div>
    <div className="min-w-0 flex-1">
      <div className="flex border-l border-t border-[#a0a0a0]">
        <div className="min-w-0 flex-1">
          <History />
        </div>
        <div className="flex w-[16px] shrink-0 flex-col items-center bg-[#f0f0f0]">
          <button type="button" aria-label="Вверх" className="flex h-[18px] items-center">
            <svg width="9" height="6"><path d="M1 5l3.500-3.500L8 5" fill="none" stroke="#505050" strokeWidth="1.800" /></svg>
          </button>
          <div className="mt-auto h-[17px] w-[15px] bg-[#cdcdcd]" />
          <button type="button" aria-label="Вниз" className="flex h-[16px] items-center">
            <svg width="9" height="6"><path d="M1 1l3.500 3.500L8 1" fill="none" stroke="#505050" strokeWidth="1.800" /></svg>
          </button>
        </div>
      </div>
      <TerminalTabs />
    </div>
  </section>
);

/* ---------- page ---------- */

const menu = ["Файл", "Вид", "Вставка", "Графики", "Сервис", "Окно", "Справка"];

const TitleBar = () => (
  <header className="flex h-[23px] shrink-0 items-center bg-white pl-[2px] text-black">
    <svg width="17" height="18" className="shrink-0">
      <circle cx="8" cy="4" r="3.500" fill="#3a9c50" />
      <circle cx="4" cy="9" r="3" fill="#2a78b8" />
      <circle cx="13" cy="9" r="3" fill="#e09030" />
      <path d="M0 17q1-5 5-5v5zM17 17q-1-5-5-5v5z" fill="#2a78b8" />
      <circle cx="9" cy="12" r="5" fill="#f0b838" stroke="#a86810" />
      <path d="M11 9.500H8l-.5 2.500q3.500-.5 3.500 1.200t-4 .8" fill="none" stroke="#7a4008" />
    </svg>
    <h1 className="ml-[4px] flex-1 whitespace-nowrap font-['Roboto',sans-serif] text-xs">
      1168598 - AMPGlobalEU-Demo: Демо-счет - Netting - EPU20,M1
    </h1>
    <button type="button" aria-label="Свернуть" className="flex h-full w-[45px] items-center justify-center">
      <svg width="10" height="10"><path d="M0 4.500h10" stroke="#000" /></svg>
    </button>
    <button type="button" aria-label="Восстановить" className="flex h-full w-[45px] items-center justify-center">
      <svg width="10" height="10" fill="none" stroke="#000">
        <path d="M0.500 2.500h7v7h-7zM2.500 2.500v-2h7v7h-2" />
      </svg>
    </button>
    <button type="button" aria-label="Закрыть" className="flex h-full w-[48px] items-center justify-center">
      <svg width="10" height="10"><path d="M0.500 0.500l9 9M9.500 0.500l-9 9" stroke="#000" /></svg>
    </button>
  </header>
);

const ChartTabs = () => (
  <nav className="flex h-[21px] shrink-0 border-b border-[#d0d0d0] bg-[#f0f0f0] text-[#7a7a7a]">
    <div className="flex flex-1 border-t-2 border-black pl-[2px]">
      <button type="button" className="h-[18px] px-[12px]">EPU20,M10</button>
      <button
        type="button"
        className="-mt-[2px] h-[20px] border-2 border-t-0 border-black bg-white px-[10px] pt-px text-black"
      >
        EPU20,M1
      </button>
      <button type="button" className="relative h-[18px] px-[12px]">
        EPU20,M1
        <span className="absolute right-0 top-[3px] h-[13px] w-px bg-[#6e6e6e]" />
      </button>
      <button type="button" className="h-[18px] px-[12px]">EPU20,M1</button>
      <div className="ml-auto flex items-center gap-[17px] pr-[12px]">
        <button type="button" aria-label="Назад">
          <svg width="5" height="7"><path d="M4 0L0.500 3.500L4 7z" fill="#a0a0a0" /></svg>
        </button>
        <button type="button" aria-label="Вперёд">
          <svg width="5" height="7"><path d="M1 0l3.500 3.500L1 7z" fill="#a0a0a0" /></svg>
        </button>
      </div>
    </div>
  </nav>
);

const StatusBar = () => (
  <footer className="flex h-[22px] shrink-0 items-end border-t border-[#a0a0a0] bg-[#f0f0f0] leading-[17px] text-black">
    <div className="flex-1 pl-[2px]">Для вызова справки нажмите F1</div>
    <div className="h-[17px] w-[297px] border-l border-[#b0b0b0] pl-[5px]">мой</div>
    <div className="h-[17px] w-[71px] border-l border-[#b0b0b0]" />
    <div className="h-[17px] w-[68px] border-l border-[#b0b0b0]" />
    <div className="h-[17px] w-[70px] border-l border-[#b0b0b0]" />
    <div className="h-[17px] w-[66px] border-l border-[#b0b0b0]" />
    <div className="flex h-[17px] w-[121px] items-center gap-[5px] border-l border-[#b0b0b0] pl-[5px]">
      <svg width="15" height="16">
        <path d="M1 2l3-2h7v13l-2 2H1z" fill="#2a98e0" stroke="#1468a8" />
        <path d="M3 4h5M3 6h5" stroke="#fff" />
        <circle cx="11" cy="12" r="3.500" fill="#6cb030" stroke="#fff" />
      </svg>
      58.8 / 0.1 Mb
    </div>
  </footer>
);

const App = () => (
  <div className="flex h-screen min-h-[640px] flex-col overflow-hidden bg-[#f0f0f0] font-['Open_Sans',sans-serif] text-[11px]">
    <TitleBar />
    <nav className="flex h-[20px] shrink-0 items-center gap-px text-black">
      {menu.map((item) => (
        <button key={item} type="button" className="px-[11px]">
          {item}
        </button>
      ))}
    </nav>
    <div className="shrink-0">
      <Toolbar />
      <Periods />
    </div>
    <main className="flex min-h-0 flex-1 pb-px pl-px">
      <ChartWindow title="EPU20,M10" frame="w-[337px] shrink-0 border-x-2 pl-[7px] pr-[3px]" inner="bg-white">
        <CandleChart />
        <TradePanel />
      </ChartWindow>
      <ChartWindow title="EPU20,M1" active frame="w-[426px] shrink-0 border-r pl-[4px] pr-[8px]" inner="">
        <FootprintLeft />
      </ChartWindow>
      <ChartWindow title="EPU20,M1" frame="min-w-0 flex-1 border-r-2 pl-[5px] pr-[9px]" inner="">
        <FootprintRight />
      </ChartWindow>
    </main>
    <ChartTabs />
    <Terminal />
    <StatusBar />
    <div className="h-[2px] shrink-0 bg-[#404040]" />
  </div>
);

export default App;
